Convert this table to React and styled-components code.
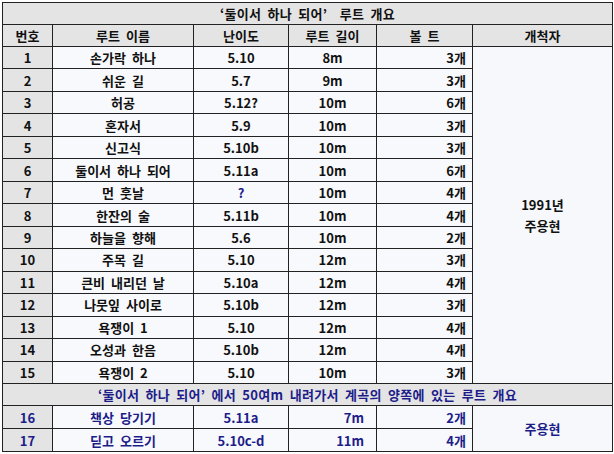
import React from "react";
import styled, { createGlobalStyle } from "styled-components";

const GlobalStyle = createGlobalStyle`
  html, body {
    margin: 0;
    padding: 0;
    background: #ffffff;
  }
  body {
    padding: 2px 0 0 2px;
    font-family: "Noto Sans CJK KR", "Noto Sans", sans-serif;
  }
`;

const RouteTable = styled.table`
  width: 610px;
  table-layout: fixed;
  border-collapse: collapse;
  border: 1px solid #111;
  font-size: 13px;
  font-weight: 700;
  color: #111;
  line-height: 1;
  word-spacing: 3px;

  td, th {
    border: 1px solid #222;
    padding: 0;
    white-space: pre;
    overflow: hidden;
  }
`;

const Row = styled.tr`
  height: ${(p) => p.$h || 22.47}px;
`;

const TitleCell = styled.td`
  background: #e4e4e4;
  text-align: center;
  letter-spacing: 0.3px;
  color: ${(p) => (p.$navy ? "#1d1d8a" : "#111")};
`;

const HeadCell = styled.th`
  background: #e4e4e4;
  font-weight: 700;
  text-align: center;
`;

const NumCell = styled.td`
  background: #e4e4e4;
  text-align: center;
  color: ${(p) => (p.$navy ? "#1d1d8a" : "#111")};
`;

const Cell = styled.td`
  background: #f8f9fc;
  text-align: ${(p) => p.$align || "center"};
  padding-right: ${(p) => p.$pr || 0}px !important;
  color: ${(p) => (p.$navy ? "#1d1d8a" : "#111")};
`;

const AuthorCell = styled.td`
  background: #f6f8fb;
  text-align: center;
  vertical-align: middle;
  line-height: 21px;
  color: ${(p) => (p.$navy ? "#1d1d8a" : "#111")};
`;

const routes = [
  ["1", "손가락 하나", "5.10", "8m", "3개"],
  ["2", "쉬운 길", "5.7", "9m", "3개"],
  ["3", "허공", "5.12?", "10m", "6개"],
  ["4", "혼자서", "5.9", "10m", "3개"],
  ["5", "신고식", "5.10b", "10m", "3개"],
  ["6", "둘이서 하나 되어", "5.11a", "10m", "6개"],
  ["7", "먼 훗날", "?", "10m", "4개"],
  ["8", "한잔의 술", "5.11b", "10m", "4개"],
  ["9", "하늘을 향해", "5.6", "10m", "2개"],
  ["10", "주목 길", "5.10", "12m", "3개"],
  ["11", "큰비 내리던 날", "5.10a", "12m", "4개"],
  ["12", "나뭇잎 사이로", "5.10b", "12m", "3개"],
  ["13", "욕쟁이 1", "5.10", "12m", "4개"],
  ["14", "오성과 한음", "5.10b", "12m", "4개"],
  ["15", "욕쟁이 2", "5.10", "10m", "3개"],
];

const valleyRoutes = [
  ["16", "책상 당기기", "5.11a", "7m", "2개"],
  ["17", "딛고 오르기", "5.10c-d", "11m", "4개"],
];

export default function App() {
  return (
    <>
      <GlobalStyle />
      <RouteTable>
        <colgroup>
          <col style={{ width: 50 }} />
          <col style={{ width: 141 }} />
          <col style={{ width: 95 }} />
          <col style={{ width: 88 }} />
          <col style={{ width: 96 }} />
          <col style={{ width: 140 }} />
        </colgroup>
        <tbody>
          <Row $h={22}>
            <TitleCell colSpan={6}>‘둘이서 하나 되어’  루트 개요</TitleCell>
          </Row>
          <Row $h={22}>
            <HeadCell>번호</HeadCell>
            <HeadCell>루트 이름</HeadCell>
            <HeadCell>난이도</HeadCell>
            <HeadCell>루트 길이</HeadCell>
            <HeadCell>볼 트</HeadCell>
            <HeadCell>개척자</HeadCell>
          </Row>
          {routes.map((r, i) => (
            <Row key={r[0]}>
              <NumCell>{r[0]}</NumCell>
              <Cell>{r[1]}</Cell>
              <Cell $navy={r[2] === "?"}>{r[2]}</Cell>
              <Cell>{r[3]}</Cell>
              <Cell $align="right" $pr={6}>{r[4]}</Cell>
              {i === 0 && (
                <AuthorCell rowSpan={15}>
                  1991년
                  <br />
                  주용현
                </AuthorCell>
              )}
            </Row>
          ))}
          <Row $h={22}>
            <TitleCell colSpan={6} $navy>
              ‘둘이서 하나 되어’ 에서 50여m 내려가서 계곡의 양쪽에 있는 루트 개요
            </TitleCell>
          </Row>
          {valleyRoutes.map((r, i) => (
            <Row key={r[0]} $h={23}>
              <NumCell $navy>{r[0]}</NumCell>
              <Cell $navy>{r[1]}</Cell>
              <Cell $navy>{r[2]}</Cell>
              <Cell $navy $align="right" $pr={12}>{r[3]}</Cell>
              <Cell $navy $align="right" $pr={6}>{r[4]}</Cell>
              {i === 0 && (
                <AuthorCell rowSpan={2} $navy>
                  주용현
                </AuthorCell>
              )}
            </Row>
          ))}
        </tbody>
      </RouteTable>
    </>
  );
}
